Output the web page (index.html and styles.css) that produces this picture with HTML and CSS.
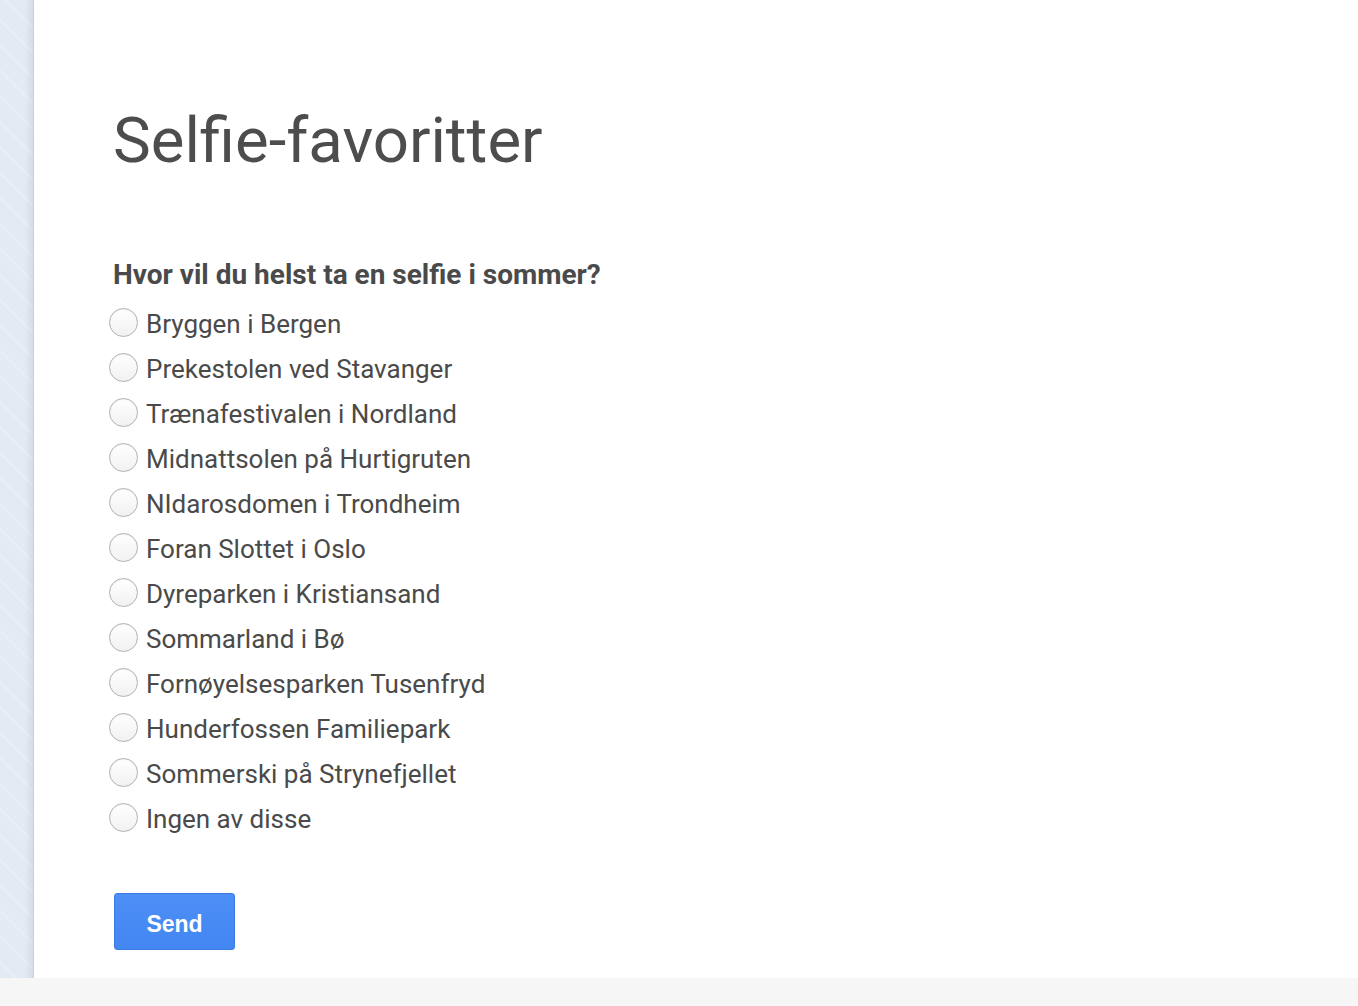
FILE: index.html
```html
<!DOCTYPE html>
<html lang="no">
<head>
<meta charset="utf-8">
<title>Selfie-favoritter</title>
<link rel="stylesheet" href="styles.css">
</head>
<body>
<div class="page">
  <div class="strip"></div>
  <main class="panel">
    <h1 class="title">Selfie-favoritter</h1>
    <form class="form">
      <p class="question">Hvor vil du helst ta en selfie i sommer?</p>
      <ul class="options">
        <li class="option"><span class="radio"></span><span class="label">Bryggen i Bergen</span></li>
        <li class="option"><span class="radio"></span><span class="label">Prekestolen ved Stavanger</span></li>
        <li class="option"><span class="radio"></span><span class="label">Trænafestivalen i Nordland</span></li>
        <li class="option"><span class="radio"></span><span class="label">Midnattsolen på Hurtigruten</span></li>
        <li class="option"><span class="radio"></span><span class="label">NIdarosdomen i Trondheim</span></li>
        <li class="option"><span class="radio"></span><span class="label">Foran Slottet i Oslo</span></li>
        <li class="option"><span class="radio"></span><span class="label">Dyreparken i Kristiansand</span></li>
        <li class="option"><span class="radio"></span><span class="label">Sommarland i Bø</span></li>
        <li class="option"><span class="radio"></span><span class="label">Fornøyelsesparken Tusenfryd</span></li>
        <li class="option"><span class="radio"></span><span class="label">Hunderfossen Familiepark</span></li>
        <li class="option"><span class="radio"></span><span class="label">Sommerski på Strynefjellet</span></li>
        <li class="option"><span class="radio"></span><span class="label">Ingen av disse</span></li>
      </ul>
      <button type="button" class="send">Send</button>
    </form>
  </main>
</div>
<footer class="footer"></footer>
</body>
</html>
```

FILE: styles.css
```css
* { box-sizing: border-box; }
html, body { margin: 0; padding: 0; }
body {
  background: #f6f6f6;
  font-family: Roboto, "Liberation Sans", sans-serif;
  color: #4d4d4d;
}
.page {
  display: flex;
  height: 978px;
}
.strip {
  width: 34px;
  flex: none;
  background:
    linear-gradient(to right, rgba(0,0,0,0) 0, rgba(0,0,0,0) 25px, rgba(120,130,145,0.10) 31px, rgba(120,130,145,0.16) 33px, #cdd0d4 33px, #cdd0d4 34px),
    repeating-linear-gradient(45deg, #e4eaf3 0, #e4eaf3 10px, #ebf0f7 11.5px, #e4eaf3 13px, #e4eaf3 18px);
}
.panel {
  flex: 1;
  background: #ffffff;
  padding: 105px 0 0 79px;
}
.title {
  margin: 0;
  font-size: 63.5px;
  line-height: 72px;
  font-weight: 400;
  color: #4d4d4d;
}
.form { margin: 0; }
.question {
  margin: 81px 0 0 0;
  font-size: 28px;
  line-height: 34px;
  font-weight: 700;
  color: #4a4a4a;
}
.options {
  list-style: none;
  margin: 10px 0 0 0;
  padding: 0;
}
.option {
  display: flex;
  align-items: center;
  height: 45px;
  font-size: 26px;
  line-height: 45px;
  color: #4a4a4a;
}
.radio {
  width: 29px;
  height: 29px;
  margin: 0 8px 4px -4px;
  border-radius: 50%;
  border: 1px solid #b2b2b2;
  background: linear-gradient(#ffffff, #f1f1f1);
  box-shadow: inset 0 1px 1px rgba(0,0,0,0.06);
  flex: none;
}
.label { white-space: nowrap; }
.send {
  display: block;
  margin: 51px 0 0 1px;
  width: 121px;
  height: 57px;
  padding: 6px 0 0 0;
  border: 1px solid #3a7be2;
  border-radius: 3px;
  background: linear-gradient(#4d8ff6, #4486f2);
  color: #ffffff;
  font-family: "Liberation Sans", Arial, sans-serif;
  font-weight: 700;
  font-size: 23px;
}
.footer {
  height: 28px;
  background: #f6f6f6;
}
```
